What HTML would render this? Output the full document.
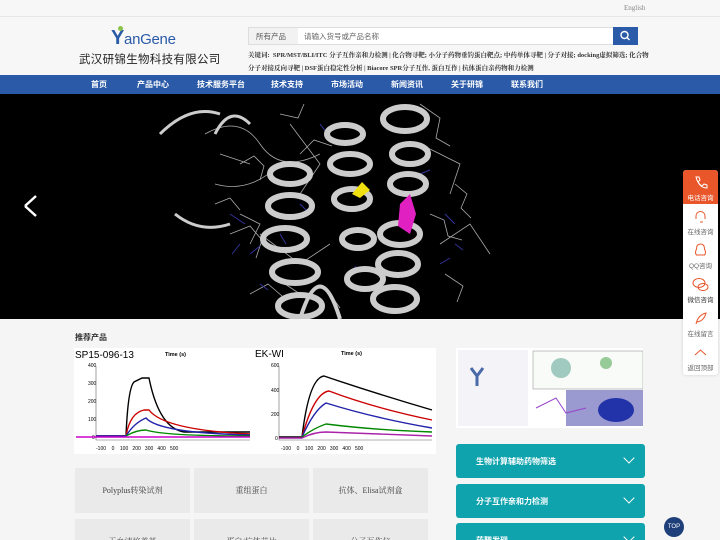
<!DOCTYPE html>
<html style="height:540px;overflow:hidden"><head><meta charset="utf-8"><style>
*{margin:0;padding:0;box-sizing:border-box}
body{width:720px;height:540px;overflow:hidden;background:#f5f5f5;font-family:"Liberation Sans","Noto Sans CJK SC",sans-serif;position:relative}
.abs{position:absolute}
.top{left:0;top:0;width:720px;height:17px;background:#f7f7f7;border-bottom:1px solid #e6e6e6}
.hdr{left:0;top:17px;width:720px;height:58px;background:#f7f7f7}
.nav{left:0;top:75px;width:720px;height:19px;background:#2b5aa8}
.nav span{position:absolute;top:4px;color:#fff;font-size:8px;font-weight:bold}
.banner{left:0;top:94px;width:720px;height:225px;background:#000;overflow:hidden}
.gb{background:#eaeaea;width:115px;height:45px;display:flex;align-items:center;justify-content:center;font-size:8px;color:#444;font-family:"Liberation Serif","Noto Serif CJK SC",serif}
.acc{left:456px;width:189px;height:34px;background:#0fa3ad;border-radius:3px;color:#fff;font-size:8px;font-weight:bold;padding:12px 0 0 20px}
.acc i{position:absolute;right:12px;top:10px;width:8px;height:8px;border-right:1px solid #fff;border-bottom:1px solid #fff;transform:rotate(45deg)}
.side{left:683px;top:170px;width:35px;height:205px;background:#fff;border-radius:3px;box-shadow:0 0 3px rgba(0,0,0,.15)}
.side div{height:34px;text-align:center;font-size:6.5px;color:#666;padding-top:22px;position:relative}
</style></head><body>
<div class="abs top"><span class="abs" style="left:624px;top:4px;font-size:7px;color:#888;font-family:'Liberation Serif',serif">English</span></div>
<div class="abs hdr">
 <div class="abs" style="left:111px;top:10px;font-size:15px;color:#2a5ba8;letter-spacing:-0.3px"><span style="font-size:20px;font-weight:bold">Y</span>anGene</div>
 <div class="abs" style="left:118px;top:9px;width:5px;height:5px;background:#8bc34a;border-radius:50%"></div>
 <div class="abs" style="left:79px;top:34px;font-size:11.5px;color:#222;letter-spacing:0.3px">武汉研锦生物科技有限公司</div>
 <div class="abs" style="left:248px;top:10px;width:390px;height:18px;background:#fff;border:1px solid #ddd"></div>
 <div class="abs" style="left:249px;top:11px;width:49px;height:16px;background:#f2f2f2;font-size:7.5px;color:#555;padding:3px 0 0 7px">所有产品</div>
 <div class="abs" style="left:304px;top:14px;font-size:7.5px;color:#666">请输入货号或产品名称</div>
 <div class="abs" style="left:613px;top:10px;width:25px;height:18px;background:#2b5aa8"><svg width="25" height="18"><circle cx="11.5" cy="8" r="3.5" stroke="#fff" stroke-width="1.4" fill="none"/><line x1="14" y1="10.5" x2="16.5" y2="13" stroke="#fff" stroke-width="1.4"/></svg></div>
 <div class="abs" style="left:248px;top:32px;width:395px;font-size:6.5px;line-height:13px;color:#333;font-weight:bold;font-family:'Liberation Serif','Noto Serif CJK SC',serif;white-space:nowrap">关键词: &nbsp;SPR/MST/BLI/ITC 分子互作亲和力检测 | 化合物寻靶; 小分子药物垂钓蛋白靶点; 中药单体寻靶 | 分子对接; docking虚拟筛选; 化合物<br>分子对接反向寻靶 | DSF蛋白稳定性分析 | Biacore SPR分子互作, 蛋白互作 | 抗体蛋白亲药物和力检测</div>
</div>
<div class="abs nav"><span style="left:91px">首页</span><span style="left:137px">产品中心</span><span style="left:197px">技术服务平台</span><span style="left:271px">技术支持</span><span style="left:331px">市场活动</span><span style="left:391px">新闻资讯</span><span style="left:451px">关于研锦</span><span style="left:511px">联系我们</span></div>
<div class="abs banner"><svg width="720" height="225">
<g stroke="#aaa" stroke-width=".8" fill="none">
<path d="M205 40 Q240 20 260 50 T320 60 M215 90 Q250 100 280 70 M260 140 L300 170 L330 150 M240 120 l20 10 l-10 20 M290 30 l30 40 l-20 30 M420 50 l40 20 l-10 30 M440 150 l30 -20 l20 30 M220 60 l30 10 M270 180 l30 20 M230 140 l20 -8 l12 14 l-6 18 M250 200 l18 -10 l14 12 M420 10 l20 14 l-4 20 l14 8 M445 180 l18 12 l-6 16 M300 60 l14 -14 l18 6 M330 200 l10 14 M240 70 l14 -8 l10 10 l-4 14 M455 90 l12 10 l-6 14 l10 10 M215 110 l15 -6 l10 12 M280 20 l18 4 l6 -14 M430 120 l14 6 l4 16 l14 4"/>
</g>
<g stroke="#33339a" stroke-width="1" fill="none"><path d="M230 120 l15 10 M250 160 l10 -8 M300 110 l8 8 M440 170 l10 -6 M445 120 l10 10 M280 140 l6 10 M260 190 l8 6 M420 80 l10 -4 M320 30 l6 8 M240 150 l-8 10 M455 150 l8 6 M350 180 l6 -8"/></g>
<g stroke="#ccc" stroke-width="6" fill="none">
<ellipse cx="290" cy="80" rx="20" ry="10"/><ellipse cx="290" cy="112" rx="22" ry="11"/><ellipse cx="285" cy="145" rx="22" ry="11"/><ellipse cx="295" cy="178" rx="23" ry="11"/><ellipse cx="300" cy="212" rx="22" ry="11"/>
<ellipse cx="345" cy="40" rx="18" ry="9"/><ellipse cx="350" cy="70" rx="20" ry="10"/><ellipse cx="352" cy="105" rx="18" ry="10"/><ellipse cx="358" cy="145" rx="16" ry="9"/><ellipse cx="365" cy="185" rx="18" ry="10"/>
<ellipse cx="405" cy="25" rx="22" ry="12"/><ellipse cx="410" cy="60" rx="18" ry="10"/><ellipse cx="408" cy="90" rx="18" ry="10"/><ellipse cx="400" cy="140" rx="20" ry="11"/><ellipse cx="398" cy="170" rx="20" ry="11"/><ellipse cx="395" cy="205" rx="22" ry="12"/>
<path d="M215 40 Q230 10 250 30" stroke-width="3"/><path d="M300 225 Q320 160 340 225" stroke-width="4"/><path d="M160 40 Q190 10 220 20" stroke-width="3"/><path d="M175 120 Q200 140 230 130" stroke-width="3"/>
</g>
<path d="M352 100 l10 -12 l8 8 l-10 8z" fill="#f0e010"/><path d="M400 110 l10 -10 l6 20 l-6 20 l-12 -8z" fill="#e020c0"/>
<path d="M25 112 l11 -10 M25 112 l11 10" stroke="#fff" stroke-width="2.5" fill="none"/>
</svg></div>
<div class="abs" style="left:75px;top:332px;font-size:8px;font-weight:bold;color:#333">推荐产品</div>
<div class="abs" style="left:74px;top:348px;width:362px;height:106px;background:#fff"><svg width="362" height="106" font-family="Liberation Sans" font-size="5">
<text x="1" y="10" font-size="10">SP15-096-13</text><text x="91" y="8" font-size="5.5" font-weight="bold">Time (s)</text>
<text x="181" y="9" font-size="10">EK-WI</text><text x="267" y="7" font-size="5.5" font-weight="bold">Time (s)</text>
<g stroke="#666" stroke-width=".6" fill="none"><path d="M22 18 V92 H176"/><path d="M205 18 V92 H358"/></g>
<g font-size="5"><text x="14" y="19">400</text><text x="14" y="37">300</text><text x="14" y="55">200</text><text x="14" y="73">100</text><text x="18" y="91">0</text><text x="22" y="102">-100 &#160;&#160;&#160;0 &#160;&#160;&#160;100 &#160;&#160;200 &#160;&#160;300 &#160;&#160;400 &#160;&#160;500</text>
<text x="197" y="19">600</text><text x="197" y="44">400</text><text x="197" y="68">200</text><text x="201" y="92">0</text><text x="207" y="102">-100 &#160;&#160;&#160;0 &#160;&#160;&#160;100 &#160;&#160;200 &#160;&#160;300 &#160;&#160;400 &#160;&#160;500</text></g>
<g fill="none" stroke-width="1.4"><path d="M22 88 H52 Q54 40 60 34 L68 30 H75 Q85 80 110 84 H176" stroke="#000"/><path d="M22 88 H52 Q56 65 70 62 H75 Q90 82 176 86" stroke="#c00"/><path d="M22 88 H52 Q60 75 72 70 Q85 85 176 87" stroke="#22a"/><path d="M52 88 Q62 82 72 82 Q90 88 176 88" stroke="#080"/><path d="M2 89 H176" stroke="#c0c"/>
<path d="M205 89 H228 Q235 30 250 28 Q300 45 358 62" stroke="#000"/><path d="M228 89 Q240 45 255 43 Q300 60 358 72" stroke="#c00"/><path d="M228 89 Q240 62 252 55 Q300 70 358 80" stroke="#22a"/><path d="M228 89 Q240 80 252 76 Q300 82 358 84" stroke="#080"/><path d="M205 90 H228 Q240 84 252 84 Q300 86 358 88" stroke="#a2a"/></g>
</svg></div>
<div class="abs gb" style="left:75px;top:468px">Polyplus转染试剂</div>
<div class="abs gb" style="left:194px;top:468px">重组蛋白</div>
<div class="abs gb" style="left:313px;top:468px">抗体、Elisa试剂盒</div>
<div class="abs gb" style="left:75px;top:519px;height:21px;align-items:flex-start;padding-top:17px">无血清培养基</div>
<div class="abs gb" style="left:194px;top:519px;height:21px;align-items:flex-start;padding-top:17px">蛋白/抗体芯片</div>
<div class="abs gb" style="left:313px;top:519px;height:21px;align-items:flex-start;padding-top:17px">分子互作仪</div>
<div class="abs" style="left:456px;top:348px;width:187px;height:80px;background:#fff"><svg width="187" height="80"><rect x="2" y="2" width="70" height="76" fill="#f4f4f8"/><path d="M15 20 l6 8 l6 -8 M21 28 v10" stroke="#4a6aa8" stroke-width="3" fill="none"/><rect x="77" y="3" width="110" height="38" fill="#f8fbf8" stroke="#888" stroke-width=".5"/><circle cx="105" cy="20" r="10" fill="#6a9" opacity=".6"/><circle cx="150" cy="15" r="6" fill="#5a5" opacity=".6"/><rect x="110" y="42" width="77" height="36" fill="#9a9ad0"/><ellipse cx="160" cy="62" rx="18" ry="12" fill="#2233aa"/><path d="M80 60 l20 -10 l10 15 l20 -5" stroke="#94c" fill="none"/></svg></div>
<div class="abs acc" style="top:444px">生物计算辅助药物筛选<i></i></div>
<div class="abs acc" style="top:484px">分子互作亲和力检测<i></i></div>
<div class="abs acc" style="top:523px">药靶发现<i></i></div>
<div class="abs side">
 <div style="background:#e8562a;color:#fff;border-radius:3px 3px 0 0">电话咨询<svg class="abs" style="left:10px;top:5px" width="15" height="15"><path d="M3 2 l3 0 l1 3 l-2 2 q2 3 4 4 l2 -2 l3 1 l0 3 q-8 0 -11 -11z" stroke="#fff" fill="none"/></svg></div>
 <div>在线咨询<svg class="abs" style="left:10px;top:5px" width="15" height="15"><path d="M3 10 v-3 a4.5 4.5 0 0 1 9 0 v3 M7 13 h3" stroke="#e8562a" fill="none"/></svg></div>
 <div>QQ咨询<svg class="abs" style="left:11px;top:5px" width="13" height="15"><path d="M6.5 1 q4 0 4 5 q2 4 0 6 h-8 q-2 -2 0 -6 q0 -5 4 -5z" stroke="#e8562a" fill="none"/></svg></div>
 <div style="color:#333">微信咨询<svg class="abs" style="left:9px;top:5px" width="17" height="15"><ellipse cx="7" cy="6" rx="6" ry="4.5" stroke="#e8562a" fill="none"/><ellipse cx="11" cy="10" rx="5" ry="3.5" stroke="#e8562a" fill="none"/></svg></div>
 <div>在线留言<svg class="abs" style="left:11px;top:5px" width="14" height="15"><path d="M2 13 Q4 4 12 2 Q10 10 3 11" stroke="#e8562a" fill="none"/></svg></div>
 <div>返回顶部<svg class="abs" style="left:10px;top:8px" width="15" height="10"><path d="M2 7 l5.5 -5 l5.5 5" stroke="#e8562a" fill="none"/></svg></div>
</div>
<div class="abs" style="left:664px;top:517px;width:20px;height:20px;border-radius:50%;background:#1e3f7a;color:#fff;font-size:6px;text-align:center;padding-top:7px">TOP</div>
</body></html>
